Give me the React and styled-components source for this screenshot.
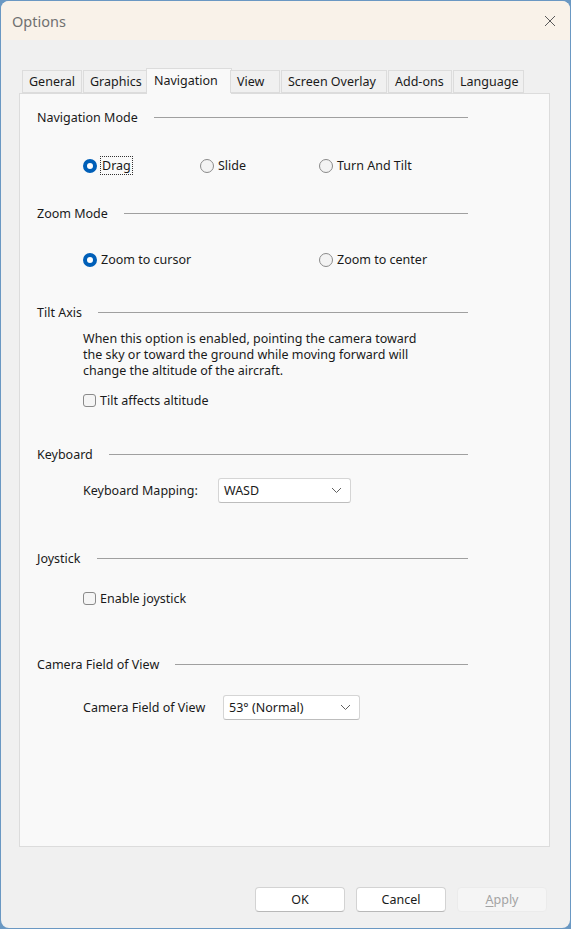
import React from "react";
import styled, { createGlobalStyle } from "styled-components";

const Global = createGlobalStyle`
  html, body { margin: 0; padding: 0; }
  body {
    background: #6a98c3;
    font-family: "Noto Sans", "Open Sans", sans-serif;
    font-size: 12px;
    color: #1a1a1a;
  }
`;

const Window = styled.div`
  margin: 1px;
  width: 569px;
  height: 927px;
  box-sizing: border-box;
  background: #f0f0f0;
  border-radius: 8px;
  overflow: hidden;
  display: flex;
  flex-direction: column;
`;

const TitleBar = styled.div`
  height: 39px;
  flex: none;
  background: #f9f2e9;
  display: flex;
  align-items: center;
  justify-content: space-between;
  padding: 0 14px 0 11px;
`;

const Title = styled.span`
  font-size: 14.5px;
  color: #707070;
`;

const Body = styled.div`
  flex: 1;
  display: flex;
  flex-direction: column;
  padding: 27px 20px 0 18px;
`;

const TabRow = styled.div`
  display: flex;
  align-items: flex-end;
  height: 26px;
  padding-left: 3px;
  position: relative;
  z-index: 1;
`;

const Tab = styled.div`
  width: ${(p) => p.w}px;
  height: ${(p) => (p.active ? 26 : 23)}px;
  box-sizing: border-box;
  margin: ${(p) => (p.active ? "0 -2px -1px -2px" : "0 1px 0 0")};
  background: ${(p) => (p.active ? "#f9f9f9" : "#f0f0f0")};
  border: 1px solid #dcdcdc;
  border-bottom: ${(p) => (p.active ? "none" : "1px solid #dcdcdc")};
  display: flex;
  align-items: ${(p) => (p.active ? "flex-start" : "center")};
  padding: ${(p) => (p.active ? "3px 0 0 7px" : "0 0 0 6px")};
  font-size: 12.5px;
  color: #1a1a1a;
  white-space: nowrap;
`;

const Panel = styled.div`
  height: 754px;
  box-sizing: border-box;
  background: #f9f9f9;
  border: 1px solid #dcdcdc;
  padding: 15px 81px 0 17px;
  display: flex;
  flex-direction: column;
`;

const Header = styled.div`
  display: flex;
  align-items: center;
  height: 16px;
  margin-top: ${(p) => p.mt || 0}px;
  font-size: 12.5px;
  gap: 16px;
  white-space: nowrap;
  &::after {
    content: "";
    flex: 1;
    height: 1px;
    background: #a0a0a0;
  }
`;

const RadioRow = styled.div`
  display: grid;
  grid-template-columns: ${(p) => p.cols};
  margin-top: ${(p) => p.mt}px;
  padding-left: 46px;
  height: 16px;
  align-items: center;
`;

const Choice = styled.label`
  display: flex;
  align-items: center;
  gap: 4px;
  font-size: 12.5px;
  white-space: nowrap;
`;

const RadioDot = styled.span`
  width: 14px;
  height: 14px;
  box-sizing: border-box;
  border-radius: 50%;
  flex: none;
  background: ${(p) => (p.on ? "#ffffff" : "#f3f3f3")};
  border: ${(p) => (p.on ? "4px solid #005fb8" : "1px solid #8a8a8a")};
`;

const Box = styled.span`
  width: 13px;
  height: 13px;
  box-sizing: border-box;
  border-radius: 3px;
  flex: none;
  background: #f5f5f5;
  border: 1px solid #8a8a8a;
`;

const Focused = styled.span`
  outline: 1px dotted #333;
  outline-offset: 0px;
  padding: 0 1px;
`;

const Indent = styled.div`
  padding-left: ${(p) => p.pl || 47}px;
  margin-top: ${(p) => p.mt}px;
`;

const Desc = styled.p`
  margin: 0;
  font-size: 12.5px;
  line-height: 16px;
  width: 345px;
`;

const CheckRow = styled.div`
  margin-top: ${(p) => p.mt}px;
  padding-left: 46px;
  height: 16px;
  display: flex;
  align-items: center;
`;

const FieldRow = styled.div`
  display: flex;
  align-items: center;
  margin-top: ${(p) => p.mt}px;
  padding-left: 46px;
  font-size: 12.5px;
`;

const FieldLabel = styled.span`
  width: ${(p) => p.w}px;
  flex: none;
  white-space: nowrap;
`;

const Select = styled.div`
  width: ${(p) => p.w}px;
  height: 25px;
  box-sizing: border-box;
  background: #ffffff;
  border: 1px solid #d5d5d5;
  border-bottom-color: #bdbdbd;
  border-radius: 3px;
  display: flex;
  align-items: center;
  justify-content: space-between;
  padding: 0 8px 0 5px;
  font-size: 12.5px;
`;

const Footer = styled.div`
  display: flex;
  justify-content: flex-end;
  gap: 11px;
  padding: 40px 3px 0 0;
`;

const Button = styled.div`
  width: 90px;
  height: 25px;
  box-sizing: border-box;
  border-radius: 4px;
  display: flex;
  align-items: center;
  justify-content: center;
  font-size: 12.5px;
  background: ${(p) => (p.disabled ? "#f5f5f5" : "#ffffff")};
  color: ${(p) => (p.disabled ? "#a3a3a3" : "#1a1a1a")};
  border: 1px solid ${(p) => (p.disabled ? "#ebebeb" : "#d3d3d3")};
  border-bottom-color: ${(p) => (p.disabled ? "#ebebeb" : "#b8b8b8")};
  u { text-decoration: underline; text-underline-offset: 2px; }
`;

const Chevron = () => (
  <svg width="11" height="7" viewBox="0 0 11 7">
    <path d="M1 1l4.5 4.5L10 1" fill="none" stroke="#606060" strokeWidth="1" />
  </svg>
);

const CloseIcon = () => (
  <svg width="12" height="12" viewBox="0 0 12 12">
    <path d="M1 1l10 10M11 1L1 11" stroke="#5a5a5a" strokeWidth="1" />
  </svg>
);

const tabs = [
  ["General", 60],
  ["Graphics", 64],
  ["Navigation", 86],
  ["View", 50],
  ["Screen Overlay", 106],
  ["Add-ons", 64],
  ["Language", 71],
];

export default function App() {
  return (
    <>
      <Global />
      <Window>
        <TitleBar>
          <Title>Options</Title>
          <CloseIcon />
        </TitleBar>
        <Body>
          <TabRow>
            {tabs.map(([t, w]) => (
              <Tab key={t} w={w} active={t === "Navigation"}>
                {t}
              </Tab>
            ))}
          </TabRow>
          <Panel>
            <Header>Navigation Mode</Header>
            <RadioRow mt={32} cols="117px 119px 1fr">
              <Choice>
                <RadioDot on />
                <Focused>Drag</Focused>
              </Choice>
              <Choice>
                <RadioDot />
                Slide
              </Choice>
              <Choice>
                <RadioDot />
                Turn And Tilt
              </Choice>
            </RadioRow>

            <Header mt={32}>Zoom Mode</Header>
            <RadioRow mt={30} cols="236px 1fr">
              <Choice>
                <RadioDot on />
                Zoom to cursor
              </Choice>
              <Choice>
                <RadioDot />
                Zoom to center
              </Choice>
            </RadioRow>

            <Header mt={37}>Tilt Axis</Header>
            <Indent mt={11} pl={46}>
              <Desc>
                When this option is enabled, pointing the camera toward the sky or
                toward the ground while moving forward will change the altitude of
                the aircraft.
              </Desc>
            </Indent>
            <CheckRow mt={13}>
              <Choice>
                <Box />
                Tilt affects altitude
              </Choice>
            </CheckRow>

            <Header mt={38}>Keyboard</Header>
            <FieldRow mt={16}>
              <FieldLabel w={135}>Keyboard Mapping:</FieldLabel>
              <Select w={133}>
                WASD
                <Chevron />
              </Select>
            </FieldRow>

            <Header mt={47}>Joystick</Header>
            <CheckRow mt={24}>
              <Choice>
                <Box />
                Enable joystick
              </Choice>
            </CheckRow>

            <Header mt={50}>Camera Field of View</Header>
            <FieldRow mt={23}>
              <FieldLabel w={140}>Camera Field of View</FieldLabel>
              <Select w={137}>
                53° (Normal)
                <Chevron />
              </Select>
            </FieldRow>
          </Panel>
          <Footer>
            <Button>OK</Button>
            <Button>Cancel</Button>
            <Button disabled>
              <span>
                <u>A</u>pply
              </span>
            </Button>
          </Footer>
        </Body>
      </Window>
    </>
  );
}
